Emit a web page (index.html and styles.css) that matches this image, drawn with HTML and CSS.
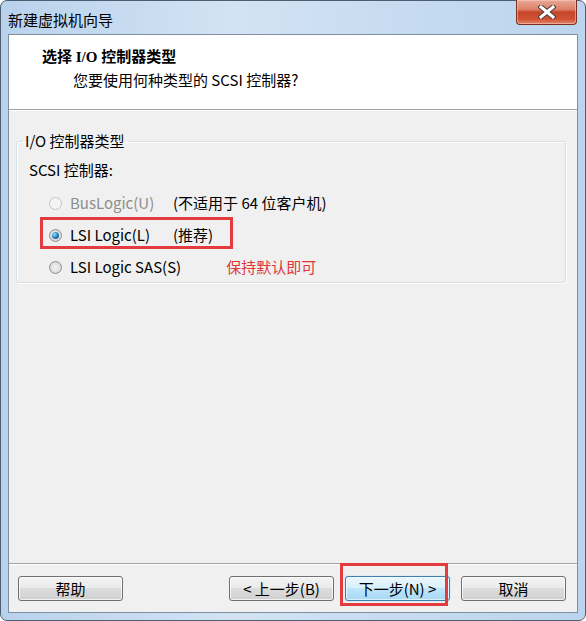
FILE: index.html
```html
<!DOCTYPE html>
<html lang="zh-CN">
<head>
    <meta charset="UTF-8">
    <meta name="viewport" content="width=device-width, initial-scale=1.0">
    <title>新建虚拟机向导</title>
    <link rel="stylesheet" href="styles.css">
</head>
<body>

<div class="window">
    <div class="titlebar">
        <span class="title">新建虚拟机向导</span>
        <button class="close" aria-label="关闭">
            <svg width="18" height="14" viewBox="0 0 18 14">
                <path d="M3 2 L15 12 M15 2 L3 12" stroke="#4a3a36" stroke-width="5" stroke-linecap="square"/>
                <path d="M3 2 L15 12 M15 2 L3 12" stroke="#ffffff" stroke-width="3" stroke-linecap="square"/>
            </svg>
        </button>
    </div>

    <div class="client">
        <div class="header">
            <h1>选择 I/O 控制器类型</h1>
            <p>您要使用何种类型的 SCSI 控制器?</p>
        </div>

        <div class="content">
            <fieldset class="group">
                <legend>I/O 控制器类型</legend>
                <div class="label">SCSI 控制器:</div>

                <div class="option disabled">
                    <span class="radio"></span>
                    <span class="name">BusLogic(U)</span>
                    <span class="note">(不适用于 64 位客户机)</span>
                </div>
                <div class="option">
                    <span class="radio checked"></span>
                    <span class="name">LSI Logic(L)</span>
                    <span class="note">(推荐)</span>
                    <span class="mark mark-option"></span>
                </div>
                <div class="option">
                    <span class="radio"></span>
                    <span class="name">LSI Logic SAS(S)</span>
                    <span class="hint">保持默认即可</span>
                </div>
            </fieldset>
        </div>

        <div class="footer">
            <button class="btn">帮助</button>
            <div class="nav">
                <button class="btn">&lt; 上一步(B)</button>
                <button class="btn default">下一步(N) &gt;</button>
                <button class="btn">取消</button>
                <span class="mark mark-next"></span>
            </div>
        </div>
    </div>
</div>

</body>
</html>
```

FILE: styles.css
```css
body {
    margin: 0;
    font-family: "Noto Sans CJK SC", "Noto Sans", sans-serif;
    font-size: 15px;
    color: #000;
    background: #ffffff;
}
.window {
    width: 586px;
    height: 621px;
    box-sizing: border-box;
    border: 1px solid #4d5e70;
    border-radius: 7px;
    background: linear-gradient(90deg, #b9d2ec 0%, #d3e3f4 40%, #c6dbf0 70%, #bcd4ed 100%);
    display: flex;
    flex-direction: column;
}
.titlebar {
    height: 33px;
    display: flex;
    align-items: flex-start;
    justify-content: space-between;
}
.title {
    margin: 9px 0 0 7px;
    line-height: 20px;
    font-size: 15px;
}
.close {
    width: 61px;
    height: 25px;
    margin: -1px 8px 0 0;
    padding: 0;
    border: 1px solid #7a2f22;
    border-top: none;
    border-radius: 0 0 4px 4px;
    background: linear-gradient(180deg, #e9a998 0%, #dc7e66 40%, #c7452a 50%, #cf5234 80%, #e5876a 100%);
    box-shadow: inset 0 0 0 1px rgba(255, 210, 200, 0.5);
    display: flex;
    align-items: center;
    justify-content: center;
}
.client {
    flex: 1;
    margin: 0 7px 7px 7px;
    border: 1px solid #7f8fa0;
    background: #f0f0f0;
    display: flex;
    flex-direction: column;
}
.header {
    height: 75px;
    box-sizing: border-box;
    background: #fff;
    border-bottom: 1px solid #a0a0a0;
    padding-top: 12px;
}
.header h1 {
    margin: 0 0 0 33px;
    font-family: "Liberation Serif", "Noto Sans CJK SC", serif;
    font-size: 15px;
    font-weight: bold;
    line-height: 20px;
}
.header p {
    margin: 3px 0 0 64px;
    line-height: 20px;
}
.content {
    flex: 1;
    padding: 20px 11px 0 7px;
    border-top: 1px solid #fff;
}
.group {
    margin: 0;
    padding: 0 0 4px 0;
    border: 1px solid #d5dfe5;
    border-radius: 3px;
    box-shadow: inset 1px 1px 0 #fff, 1px 1px 0 #fff;
    position: relative;
}
.group legend {
    margin-left: 5px;
    padding: 0 3px;
    line-height: 20px;
}
.label {
    margin: 9px 0 0 12px;
    line-height: 20px;
}
.option {
    display: flex;
    align-items: center;
    height: 22px;
    margin-top: 10px;
    padding-left: 32px;
    line-height: 20px;
}
.label + .option {
    margin-top: 12px;
}
.radio {
    width: 13px;
    height: 13px;
    box-sizing: border-box;
    border-radius: 50%;
    border: 1px solid #8e8f8f;
    background: radial-gradient(circle at 50% 50%, #f4f4f4 0%, #e2e2e2 50%, #cfcfcf 100%);
    margin-right: 8px;
    display: flex;
    align-items: center;
    justify-content: center;
}
.radio.checked::after {
    content: "";
    width: 7px;
    height: 7px;
    border-radius: 50%;
    background: radial-gradient(circle at 35% 35%, #8fe0fa 0%, #2f8cc7 45%, #0d3558 100%);
}
.disabled .radio {
    border-color: #c4c4c4;
    background: #f4f4f4;
}
.disabled .name {
    color: #8d8d8d;
}
.name {
    min-width: 103px;
}
.hint {
    margin-left: 45px;
    color: #e0353a;
}
.mark {
    position: absolute;
    border: 3px solid #e23b40;
    pointer-events: none;
}
.mark-option {
    left: 23px;
    top: 66px;
    width: 187px;
    height: 26px;
}
.footer {
    display: flex;
    align-items: flex-start;
    justify-content: space-between;
    padding: 12px 11px 11px 9px;
    border-top: 1px solid #a0a0a0;
    box-shadow: inset 0 1px 0 #fff;
}
.nav {
    display: flex;
    gap: 11px;
    position: relative;
}
.btn {
    width: 105px;
    height: 25px;
    padding: 0;
    border: 1px solid #707070;
    border-radius: 3px;
    background: linear-gradient(180deg, #f2f2f2 0%, #ebebeb 49%, #dddddd 50%, #cfcfcf 100%);
    box-shadow: inset 0 0 0 1px rgba(255, 255, 255, 0.7);
    font-family: "Noto Sans CJK SC", "Noto Sans", sans-serif;
    font-size: 15px;
    line-height: 20px;
    color: #000;
}
.btn.default {
    border-color: #3c7fb1;
    background: linear-gradient(180deg, #eaf6fd 0%, #d9f0fc 49%, #bee6fd 50%, #a7d9f5 100%);
    box-shadow: inset 0 0 0 1px rgba(255, 255, 255, 0.6), 0 0 1px #48c4f4;
}
.mark-next {
    left: 111px;
    top: -13px;
    width: 102px;
    height: 37px;
}
```
